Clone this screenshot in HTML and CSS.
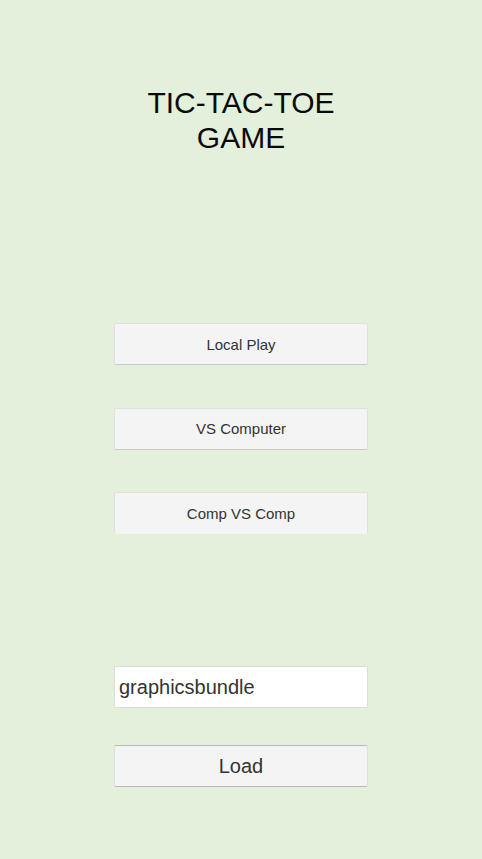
FILE: index.html
```html
<!DOCTYPE html>
<html>
<head>
<meta charset="utf-8">
<link rel="stylesheet" href="styles.css">
</head>
<body>
<main class="screen">
  <h1 class="title">TIC-TAC-TOE<br>GAME</h1>
  <div class="menu">
    <button class="btn">Local Play</button>
    <button class="btn">VS Computer</button>
    <button class="btn btn-cut">Comp VS Comp</button>
  </div>
  <div class="loader">
    <input class="field" type="text" value="graphicsbundle">
    <button class="btn btn-load">Load</button>
  </div>
</main>
</body>
</html>
```
FILE: styles.css
```css
html, body {
  margin: 0;
  padding: 0;
  background: #e3f0dc;
}
.screen {
  width: 482px;
  height: 859px;
  display: flex;
  flex-direction: column;
  align-items: center;
  padding-top: 85px;
  box-sizing: border-box;
  font-family: "Liberation Sans", Arial, sans-serif;
}
.title {
  margin: 0;
  font-weight: normal;
  font-size: 30px;
  line-height: 35px;
  text-align: center;
  color: #0a0a0a;
}
.menu {
  margin-top: 168px;
  display: flex;
  flex-direction: column;
  gap: 42.5px;
}
.btn {
  width: 254px;
  height: 42px;
  margin: 0;
  padding: 0;
  box-sizing: border-box;
  background: #f4f4f4;
  border: 1px solid #e0e0e0;
  border-bottom-color: #c9c9c9;
  border-radius: 2px;
  font-family: "Liberation Sans", Arial, sans-serif;
  font-size: 15px;
  color: #333;
}
.btn-cut {
  border-bottom-color: #f4f4f4;
}
.loader {
  margin-top: 132px;
  display: flex;
  flex-direction: column;
  gap: 37px;
}
.field {
  width: 254px;
  height: 42px;
  margin: 0;
  box-sizing: border-box;
  padding: 0 4px;
  background: #ffffff;
  border: 1px solid #dcdcdc;
  border-radius: 2px;
  font-family: "Liberation Sans", Arial, sans-serif;
  font-size: 20px;
  color: #333;
  outline: none;
}
.btn-load {
  font-size: 20px;
  border-top-color: #b8b8b8;
  border-bottom-color: #b8b8b8;
}
```
